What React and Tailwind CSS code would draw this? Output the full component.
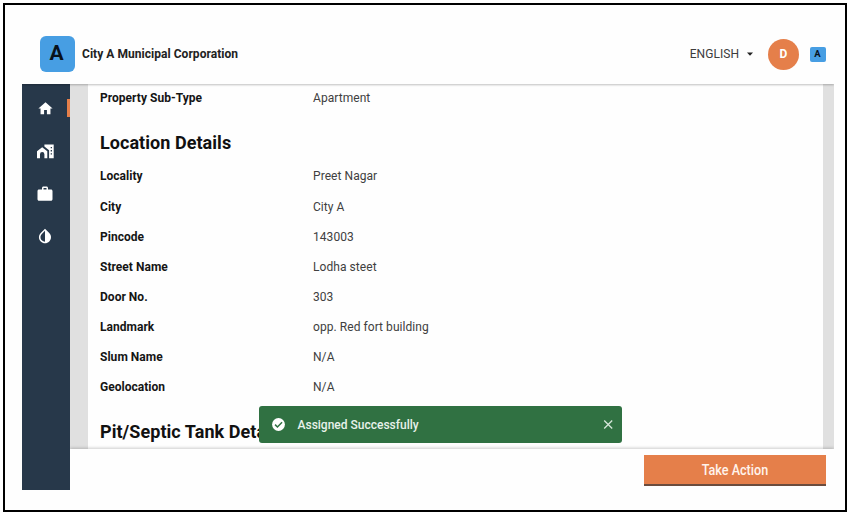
const rows = [
  ["City", "City A"],
  ["Pincode", "143003"],
  ["Street Name", "Lodha steet"],
  ["Door No.", "303"],
  ["Landmark", "opp. Red fort building"],
  ["Slum Name", "N/A"],
  ["Geolocation", "N/A"],
];

function Row({ label, value, className = "h-[30px]" }) {
  return (
    <div className={`flex shrink-0 items-center text-[12px] leading-4 ${className}`}>
      <div className="w-[213px] font-bold tracking-[0.03px] text-[#151515]">{label}</div>
      <div className="tracking-[0.06px] text-[#404040]">{value}</div>
    </div>
  );
}

function Icon({ size, children }) {
  return (
    <svg width={size} height={size} viewBox="0 0 24 24" fill="currentColor">
      {children}
    </svg>
  );
}

function Header() {
  return (
    <header className="relative z-10 flex h-[79px] shrink-0 items-center bg-[#fefefe] pt-[19px] pr-[8px] pb-[0px] pl-[18px] shadow-[0_1px_2px_rgba(0,0,0,0.25)] [clip-path:inset(0_0_-4px_0)]">
      <div className="flex h-[36px] w-[35px] items-center justify-center rounded-[6px] bg-[#479ee3] pr-[2px] pb-[2px] text-[21px] leading-none font-bold text-[#08121b]">
        A
      </div>
      <div className="ml-[7px] text-[12px] leading-4 font-bold tracking-[0.04px] text-[#222]">City A Municipal Corporation</div>
      <div className="ml-auto text-[12px] leading-4 tracking-[0.05px] text-[#3c3c3c]">ENGLISH</div>
      <svg className="ml-[8px]" width="6" height="4" viewBox="0 0 6 4">
        <path d="M0 .5h6L3 3.7z" fill="#222" />
      </svg>
      <div className="ml-[15px] flex h-[31px] w-[31px] items-center justify-center rounded-full bg-[#e57f4a] text-[12px] leading-none font-bold text-white">
        D
      </div>
      <div className="ml-[11px] flex h-[15px] w-[16px] items-center justify-center rounded-[2px] bg-[#479ee3] pr-[1px] pb-px text-[9.5px] leading-none font-bold text-[#08121b]">
        A
      </div>
    </header>
  );
}

function Sidebar() {
  return (
    <nav className="flex w-[48px] shrink-0 flex-col bg-[#27384a] pt-[15px] text-white">
      <div className="flex h-[18px] items-center pl-[15px]">
        <Icon size={17}>
          <path d="M10 20v-6h4v6h5v-8h3L12 3 2 12h3v8z" />
        </Icon>
        <div className="ml-auto h-[18px] w-[3px] bg-[#e57f4a]" />
      </div>
      <div className="mt-[26px] flex h-[18px] items-center pl-[14px]">
        <svg width="18" height="18" viewBox="0 0 18 18" fill="currentColor">
          <path d="M1 15.2V8.2L6.2 4.2l5.1 4v7H8.4v-3.9a2.2 2.2 0 0 0-4.4 0v3.9z" />
          <path fillRule="evenodd" d="M8.4 1.4H17.7v13.8h-4.6V7.3L8.4 3.6zm6.3 2.5v1.3h1.3V3.9zm0 3.2v1.3h1.3V7.1zm0 3.2v1.3h1.3v-1.3z" />
        </svg>
      </div>
      <div className="mt-[24px] flex h-[18px] items-center pl-[14px]">
        <Icon size={18}>
          <path d="M20 6h-4V4c0-1.11-.89-2-2-2h-4c-1.11 0-2 .89-2 2v2H4c-1.11 0-1.99.89-1.99 2L2 19c0 1.11.89 2 2 2h16c1.11 0 2-.89 2-2V8c0-1.11-.89-2-2-2zm-6 0h-4V4h4v2z" />
        </Icon>
      </div>
      <div className="mt-[24px] flex h-[18px] items-center pl-[14px]">
        <Icon size={18}>
          <path d="M17.66 7.93L12 2.27 6.34 7.93c-3.12 3.12-3.12 8.19 0 11.31C7.9 20.8 9.95 21.58 12 21.58c2.05 0 4.1-.78 5.66-2.34 3.12-3.12 3.12-8.19 0-11.31zM12 19.59c-1.6 0-3.11-.62-4.24-1.76C6.62 16.69 6 15.19 6 13.59s.62-3.11 1.76-4.24L12 5.1v14.49z" />
        </Icon>
      </div>
    </nav>
  );
}

export default function App() {
  return (
    <div className="h-[514px] w-[850px] overflow-hidden bg-white p-[3px] font-[Roboto,sans-serif]">
      <div className="flex h-[509px] w-[844px] flex-col border-2 border-black bg-[#fefefe] pr-[11px] pl-[17px]">
        <Header />
        <div className="flex h-[406px] shrink-0">
          <Sidebar />
          <div className="flex min-w-0 flex-1 flex-col">
            <div className="relative h-[365px] shrink-0 bg-[#e0e0e0] pr-[11px] pl-[18px]">
              <main className="flex h-full flex-col overflow-hidden bg-[#fefefe] pl-[12px]">
                <Row label="Property Sub-Type" value="Apartment" className="h-[27px]" />
                <h2 className="mt-[20px] h-[24px] shrink-0 text-[18px] leading-6 font-bold tracking-[0.05px] text-[#111]">
                  Location Details
                </h2>
                <Row label="Locality" value="Preet Nagar" className="mt-[6px] h-[30px]" />
                <div className="mt-px flex shrink-0 flex-col">
                  {rows.map(([label, value]) => (
                    <Row key={label} label={label} value={value} />
                  ))}
                </div>
                <h2 className="mt-[18px] h-[24px] shrink-0 text-[18px] leading-6 font-bold tracking-[0.05px] text-[#111]">
                  Pit/Septic Tank Details
                </h2>
              </main>
              <div className="absolute top-[322px] left-[188.5px] z-10 flex h-[37px] w-[363px] items-center rounded-[3px] bg-[#307142] pr-[8px] pl-[12px] text-[#e8f1ea]">
                <svg width="15" height="15" viewBox="0 0 24 24">
                  <circle cx="12" cy="12" r="10.3" fill="#fff" />
                  <path d="M6.5 12.2l3.8 3.8 7.4-7.5" fill="none" stroke="#307142" strokeWidth="2.4" />
                </svg>
                <div className="ml-[12px] text-[12px] leading-4 font-medium">Assigned Successfully</div>
                <svg className="ml-auto" width="11" height="11" viewBox="0 0 11 11" stroke="#d6e7da" strokeWidth="1.3">
                  <path d="M1.2 1.5l8 8M9.2 1.5l-8 8" />
                </svg>
              </div>
            </div>
            <footer className="relative flex h-[41px] justify-end bg-[#fefefe] pt-[6px] pr-[8px] shadow-[0_-1px_3px_rgba(0,0,0,0.2)] [clip-path:inset(-5px_0_0_0)]">
              <button className="flex h-[31px] w-[182px] items-center justify-center border-b-2 border-[#6b4c3e] bg-[#e57f4a] text-[14px] leading-4 font-medium text-[#fff3ec]">
                <span className="scale-x-90">Take Action</span>
              </button>
            </footer>
          </div>
        </div>
      </div>
    </div>
  );
}
